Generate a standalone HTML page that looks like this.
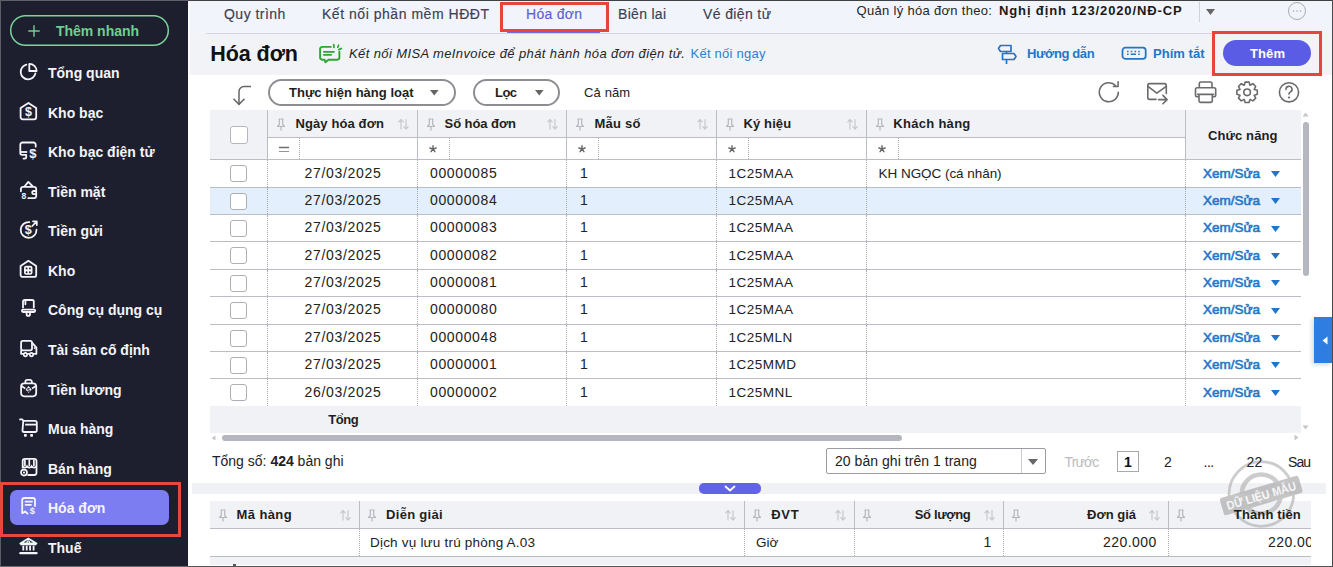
<!DOCTYPE html>
<html><head><meta charset="utf-8"><style>
html,body{margin:0;padding:0;}
body{width:1333px;height:567px;position:relative;overflow:hidden;background:#fff;font-family:"Liberation Sans",sans-serif;}
.t{position:absolute;white-space:nowrap;z-index:2;font-family:"Liberation Sans",sans-serif;}
.b{position:absolute;display:block;}
</style></head><body>
<div class="b" style="left:0px;top:0px;width:188px;height:567px;background:#1e1f2e"></div>
<svg class="b" style="left:9px;top:14px;" width="161" height="33" viewBox="0 0 161 33"><rect x="1.7" y="1.7" width="157.6" height="29.6" rx="14.8" fill="none" stroke="#79d59c" stroke-width="1.5"/></svg>
<svg class="b" style="left:27px;top:24px;" width="14" height="14" viewBox="0 0 14 14"><path d="M7 1.3V12.7M1.3 7H12.7" stroke="#6fd093" stroke-width="1.4"/></svg>
<div class="t" style="left:56.00px;top:23.65px;font-size:14px;line-height:14px;color:#6dd092;font-weight:bold;letter-spacing:-0.024px;">Thêm nhanh</div>
<svg class="b" style="left:18px;top:62px;overflow:visible" width="21" height="21" viewBox="0 0 21 21"><path d="M8.4 2.7A7.4 7.4 0 1 0 17.4 11.3" fill="none" stroke="#f4f4fa" stroke-width="1.8" stroke-linecap="round"/><path d="M11.3 1.9A7.2 7.2 0 0 1 18.6 9H11.3Z" fill="none" stroke="#f4f4fa" stroke-width="1.8" stroke-linejoin="round"/></svg>
<div class="t" style="left:48.00px;top:66.15px;font-size:14px;line-height:14px;color:#f4f4fa;font-weight:bold;letter-spacing:0.000px;">Tổng quan</div>
<svg class="b" style="left:18px;top:102px;overflow:visible" width="21" height="21" viewBox="0 0 21 21"><path d="M2.6 6L10.4 0.9L18.2 6V15.3A2 2 0 0 1 16.2 17.3H4.6A2 2 0 0 1 2.6 15.3Z" fill="none" stroke="#f4f4fa" stroke-width="1.8" stroke-linejoin="round"/><text x="10.5" y="14.4" font-size="12.5" font-weight="bold" fill="#f4f4fa" text-anchor="middle" font-family="Liberation Sans">$</text></svg>
<div class="t" style="left:48.00px;top:106.15px;font-size:14px;line-height:14px;color:#f4f4fa;font-weight:bold;letter-spacing:0.000px;">Kho bạc</div>
<svg class="b" style="left:18px;top:141px;overflow:visible" width="21" height="21" viewBox="0 0 21 21"><path d="M17.7 5.7V3.7A2.2 2.2 0 0 0 15.5 1.5H4.5A2.2 2.2 0 0 0 2.3 3.7V11.2V12A1.8 1.8 0 0 0 4.1 13.8H8.2V16A1.6 1.6 0 0 1 6.6 17.6H5.5" fill="none" stroke="#f4f4fa" stroke-width="1.8" stroke-linecap="round" stroke-linejoin="round"/><path d="M2.8 11H9.2" stroke="#f4f4fa" stroke-width="1.8"/><text x="14.8" y="17" font-size="13" font-weight="bold" fill="#f4f4fa" text-anchor="middle" font-family="Liberation Sans">$</text></svg>
<div class="t" style="left:48.00px;top:145.15px;font-size:14px;line-height:14px;color:#f4f4fa;font-weight:bold;letter-spacing:0.000px;">Kho bạc điện tử</div>
<svg class="b" style="left:18px;top:181px;overflow:visible" width="21" height="21" viewBox="0 0 21 21"><path d="M2.9 10.3V8A2.2 2.2 0 0 1 5.1 5.8H16A2.2 2.2 0 0 1 18.2 8V15A2.2 2.2 0 0 1 16 17.2H10.3" fill="none" stroke="#f4f4fa" stroke-width="1.8" stroke-linecap="round"/><path d="M6.5 5.5L10.3 0.9L14.8 5.5" fill="none" stroke="#f4f4fa" stroke-width="1.8" stroke-linejoin="round"/><path d="M18 10H15.8A1.6 1.6 0 0 0 15.8 13.2H18" fill="none" stroke="#f4f4fa" stroke-width="1.8"/><text x="5.9" y="17.9" font-size="8.5" font-weight="bold" fill="#f4f4fa" text-anchor="middle" font-family="Liberation Sans">8</text></svg>
<div class="t" style="left:48.00px;top:185.15px;font-size:14px;line-height:14px;color:#f4f4fa;font-weight:bold;letter-spacing:0.000px;">Tiền mặt</div>
<svg class="b" style="left:18px;top:220px;overflow:visible" width="21" height="21" viewBox="0 0 21 21"><path d="M11.3 2.1A7.9 7.9 0 1 0 18.5 9.6" fill="none" stroke="#f4f4fa" stroke-width="1.8" stroke-linecap="round"/><path d="M14.3 6L18.6 1.5M15 1.3H18.8V5.1" fill="none" stroke="#f4f4fa" stroke-width="1.8" stroke-linecap="round" stroke-linejoin="round"/><text x="10.3" y="14.2" font-size="12.5" font-weight="bold" fill="#f4f4fa" text-anchor="middle" font-family="Liberation Sans">$</text></svg>
<div class="t" style="left:48.00px;top:224.15px;font-size:14px;line-height:14px;color:#f4f4fa;font-weight:bold;letter-spacing:0.000px;">Tiền gửi</div>
<svg class="b" style="left:18px;top:260px;overflow:visible" width="21" height="21" viewBox="0 0 21 21"><path d="M2.6 6L10.4 0.8L18.2 6V14.9A2 2 0 0 1 16.2 16.9H4.6A2 2 0 0 1 2.6 14.9Z" fill="none" stroke="#f4f4fa" stroke-width="1.8" stroke-linejoin="round"/><rect x="6" y="5.8" width="8.5" height="9" rx="2.2" fill="#f4f4fa"/><circle cx="8.6" cy="8.4" r="0.95" fill="#1e1f2e"/><circle cx="11.9" cy="8.4" r="0.95" fill="#1e1f2e"/><circle cx="8.6" cy="12.2" r="0.95" fill="#1e1f2e"/><circle cx="11.9" cy="12.2" r="0.95" fill="#1e1f2e"/></svg>
<div class="t" style="left:48.00px;top:264.15px;font-size:14px;line-height:14px;color:#f4f4fa;font-weight:bold;letter-spacing:0.000px;">Kho</div>
<svg class="b" style="left:18px;top:299px;overflow:visible" width="21" height="21" viewBox="0 0 21 21"><path d="M5 9.2V2.6A1.6 1.6 0 0 1 6.6 1H14.2A1.6 1.6 0 0 1 15.8 2.6V9.2" fill="none" stroke="#f4f4fa" stroke-width="1.8"/><path d="M7.4 1.9V5.3" stroke="#f4f4fa" stroke-width="1.8" stroke-linecap="round"/><rect x="3.9" y="10.6" width="13.3" height="2.4" rx="1.2" fill="none" stroke="#f4f4fa" stroke-width="1.8"/><path d="M8.6 13.3V15.2A1.7 1.7 0 0 0 12 15.2V13.3" fill="none" stroke="#f4f4fa" stroke-width="1.8"/></svg>
<div class="t" style="left:48.00px;top:303.15px;font-size:14px;line-height:14px;color:#f4f4fa;font-weight:bold;letter-spacing:0.000px;">Công cụ dụng cụ</div>
<svg class="b" style="left:18px;top:339px;overflow:visible" width="21" height="21" viewBox="0 0 21 21"><rect x="3.1" y="1.8" width="10.9" height="9.5" rx="1.8" fill="none" stroke="#f4f4fa" stroke-width="1.8"/><path d="M14 3.6L18.4 8.6V14.8H3.1V11.3" fill="none" stroke="#f4f4fa" stroke-width="1.8" stroke-linejoin="round"/><path d="M16 8.5L17.2 9.8" stroke="#f4f4fa" stroke-width="1.4"/><circle cx="7.4" cy="15.6" r="1.7" fill="#1e1f2e" stroke="#f4f4fa" stroke-width="1.7"/><circle cx="13.5" cy="15.6" r="1.7" fill="#1e1f2e" stroke="#f4f4fa" stroke-width="1.7"/></svg>
<div class="t" style="left:48.00px;top:343.15px;font-size:14px;line-height:14px;color:#f4f4fa;font-weight:bold;letter-spacing:0.000px;">Tài sản cố định</div>
<svg class="b" style="left:18px;top:379px;overflow:visible" width="21" height="21" viewBox="0 0 21 21"><rect x="3.1" y="4.3" width="15.1" height="13" rx="3.2" fill="none" stroke="#f4f4fa" stroke-width="1.8"/><path d="M7.4 4.3V2.6A1.8 1.8 0 0 1 9.2 0.8H12A1.8 1.8 0 0 1 13.8 2.6V4.3" fill="none" stroke="#f4f4fa" stroke-width="1.8"/><path d="M3 6.8L7.3 9.4M18.3 6.8L14 9.4" stroke="#f4f4fa" stroke-width="1.7"/><path d="M10.6 7L13.6 10.5L10.6 14L7.6 10.5Z" fill="#f4f4fa"/><text x="10.6" y="12.6" font-size="5.5" font-weight="bold" fill="#1e1f2e" text-anchor="middle" font-family="Liberation Sans">$</text></svg>
<div class="t" style="left:48.00px;top:383.15px;font-size:14px;line-height:14px;color:#f4f4fa;font-weight:bold;letter-spacing:0.000px;">Tiền lương</div>
<svg class="b" style="left:18px;top:418px;overflow:visible" width="21" height="21" viewBox="0 0 21 21"><path d="M2 1.4H4.3L5.3 2.8H17.2A1.6 1.6 0 0 1 18.8 4.4V12.4A1.6 1.6 0 0 1 17.2 14H6.1A1.6 1.6 0 0 1 4.5 12.4L5.3 2.8" fill="none" stroke="#f4f4fa" stroke-width="1.8" stroke-linecap="round" stroke-linejoin="round"/><path d="M7.1 6.6H18" stroke="#f4f4fa" stroke-width="1.8"/><rect x="6" y="16" width="2.8" height="2.7" rx="0.7" fill="#f4f4fa"/><rect x="12.2" y="16" width="2.8" height="2.7" rx="0.7" fill="#f4f4fa"/></svg>
<div class="t" style="left:48.00px;top:422.15px;font-size:14px;line-height:14px;color:#f4f4fa;font-weight:bold;letter-spacing:0.000px;">Mua hàng</div>
<svg class="b" style="left:18px;top:458px;overflow:visible" width="21" height="21" viewBox="0 0 21 21"><path d="M4.7 10.5V3A2.2 2.2 0 0 1 6.9 0.8H16.3A2.2 2.2 0 0 1 18.5 3V14.8A2.2 2.2 0 0 1 16.3 17H9.5" fill="none" stroke="#f4f4fa" stroke-width="1.8"/><path d="M4.7 8.3C5.5 10 8 10 9 8.3C10 10 12.6 10 13.6 8.3C14.6 10 17.5 10 18.5 8.3" fill="none" stroke="#f4f4fa" stroke-width="1.7"/><path d="M6.9 2.2V7.5M11.3 2.2V7.5M15.9 2.2V7.5" stroke="#f4f4fa" stroke-width="1.7" stroke-linecap="round"/><circle cx="6" cy="14.6" r="3" fill="#1e1f2e" stroke="#f4f4fa" stroke-width="1.7"/><circle cx="6" cy="14.6" r="1.1" fill="#f4f4fa"/></svg>
<div class="t" style="left:48.00px;top:462.15px;font-size:14px;line-height:14px;color:#f4f4fa;font-weight:bold;letter-spacing:0.000px;">Bán hàng</div>
<div class="b" style="left:10px;top:490px;width:159px;height:35px;background:#7b7df0;border-radius:7px"></div>
<svg class="b" style="left:18px;top:497px;overflow:visible" width="21" height="21" viewBox="0 0 21 21"><path d="M17 9V3.2A2.2 2.2 0 0 0 14.8 1H6.4A2.2 2.2 0 0 0 4.2 3.2V16.2L7.1 14.4L9.5 16.7" fill="none" stroke="#f4f4fa" stroke-width="1.8" stroke-linecap="round" stroke-linejoin="round"/><path d="M7.6 4.6H14M7.6 7.8H13" stroke="#f4f4fa" stroke-width="1.8" stroke-linecap="round"/><text x="14.5" y="16.6" font-size="9.5" font-weight="bold" fill="#f4f4fa" text-anchor="middle" font-family="Liberation Sans">$</text></svg>
<div class="t" style="left:48.00px;top:501.15px;font-size:14px;line-height:14px;color:#f4f4fa;font-weight:bold;letter-spacing:0.000px;">Hóa đơn</div>
<svg class="b" style="left:18px;top:537px;overflow:visible" width="21" height="21" viewBox="0 0 21 21"><path d="M2.3 6.5L10.3 1.6L18.5 6.5Z" fill="none" stroke="#f4f4fa" stroke-width="1.8" stroke-linejoin="round"/><circle cx="10.3" cy="5.2" r="1.3" fill="none" stroke="#f4f4fa" stroke-width="1.2"/><path d="M5.3 8.8V13.5M8.7 8.8V13.5M12.1 8.8V13.5M15.6 8.8V13.5" stroke="#f4f4fa" stroke-width="1.8"/><path d="M2.3 16.2H18.6" stroke="#f4f4fa" stroke-width="2.2" stroke-linecap="round"/><path d="M2.5 7.6H18.3" stroke="#f4f4fa" stroke-width="1.4"/></svg>
<div class="t" style="left:48.00px;top:541.15px;font-size:14px;line-height:14px;color:#f4f4fa;font-weight:bold;letter-spacing:0.000px;">Thuế</div>
<div class="b" style="left:0px;top:482px;width:181px;height:55px;border:3px solid #e8473e;box-sizing:border-box;z-index:6"></div>
<div class="b" style="left:188px;top:0px;width:1145px;height:75px;background:#f2f3f7"></div>
<div class="b" style="left:190px;top:0px;width:1143px;height:33px;background:#f2f4fb"></div>
<div class="b" style="left:188px;top:0px;width:2px;height:567px;background:#fbfbfd"></div>
<div class="b" style="left:188px;top:75px;width:1145px;height:492px;background:#fff"></div>
<div class="b" style="left:206px;top:33px;width:1110px;height:1px;background:#d3d6de"></div>
<div class="t" style="left:224.00px;top:7.15px;font-size:14px;line-height:14px;color:#3b4052;letter-spacing:0.478px;-webkit-text-stroke:0.15px #3b4052;">Quy trình</div>
<div class="t" style="left:322.00px;top:7.15px;font-size:14px;line-height:14px;color:#3b4052;letter-spacing:0.530px;-webkit-text-stroke:0.15px #3b4052;">Kết nối phần mềm HĐĐT</div>
<div class="t" style="left:526.00px;top:7.15px;font-size:14px;line-height:14px;color:#5b60d8;letter-spacing:0.279px;-webkit-text-stroke:0.15px #5b60d8;">Hóa đơn</div>
<div class="b" style="left:507px;top:31px;width:93px;height:2px;background:#6a6ee0"></div>
<div class="t" style="left:618.00px;top:7.15px;font-size:14px;line-height:14px;color:#3b4052;letter-spacing:0.298px;-webkit-text-stroke:0.15px #3b4052;">Biên lai</div>
<div class="t" style="left:703.00px;top:7.15px;font-size:14px;line-height:14px;color:#3b4052;letter-spacing:0.374px;-webkit-text-stroke:0.15px #3b4052;">Vé điện tử</div>
<div class="b" style="left:500px;top:2px;width:109px;height:30px;border:3px solid #e6453c;box-sizing:border-box;z-index:3"></div>
<div class="t" style="left:856.50px;top:4.00px;font-size:13px;line-height:13px;color:#262626;letter-spacing:0.309px;">Quản lý hóa đơn theo:</div>
<div class="t" style="left:999.00px;top:4.00px;font-size:13px;line-height:13px;color:#1a1a1a;font-weight:bold;letter-spacing:0.872px;">Nghị định 123/2020/NĐ-CP</div>
<div class="b" style="left:1199px;top:2px;width:1px;height:20px;background:#cfd1d8"></div>
<svg class="b" style="left:1206px;top:9px;" width="9" height="6" viewBox="0 0 9 6"><path d="M0 0H9L4.5 6Z" fill="#666"/></svg>
<svg class="b" style="left:1287px;top:1px;" width="20" height="20" viewBox="0 0 20 20"><circle cx="10" cy="10" r="8.5" fill="none" stroke="#a9abb3" stroke-width="1"/><circle cx="6.5" cy="10" r=".7" fill="#999"/><circle cx="10" cy="10" r=".7" fill="#999"/><circle cx="13.5" cy="10" r=".7" fill="#999"/></svg>
<div class="t" style="left:210.30px;top:43.80px;font-size:21.5px;line-height:21.5px;color:#111;font-weight:bold;letter-spacing:-0.074px;">Hóa đơn</div>
<svg class="b" style="left:318px;top:43px;" width="26" height="22" viewBox="0 0 26 22"><path d="M12.8 3.9H4.2A2.1 2.1 0 0 0 2.1 6V14.6A2.1 2.1 0 0 0 4.2 16.7H6.6L7.4 19.3L10.4 16.7H19.3A2.1 2.1 0 0 0 21.4 14.6V8.8" fill="none" stroke="#2fa535" stroke-width="1.9" stroke-linejoin="round" stroke-linecap="round"/><path d="M5.2 8.8H16.6M5.2 11.8H13.8" stroke="#2fa535" stroke-width="1.7"/><path d="M15.7 1.7L16 4.4M20.6 2.2L19.8 4.2M20.8 6.6L23.4 5.5" stroke="#2fa535" stroke-width="1.7" stroke-linecap="round"/></svg>
<div class="t" style="left:349.00px;top:47.00px;font-size:13px;line-height:13px;color:#1f1f1f;font-style:italic;letter-spacing:0.385px;">Kết nối MISA meInvoice để phát hành hóa đơn điện tử.</div>
<div class="t" style="left:690.50px;top:47.00px;font-size:13px;line-height:13px;color:#2b80d0;letter-spacing:0.248px;">Kết nối ngay</div>
<svg class="b" style="left:997px;top:44px;" width="21" height="21" viewBox="0 0 21 21"><path d="M3.5 1.5H14V7.5H3.5L1.5 4.5Z" fill="none" stroke="#2276c9" stroke-width="1.7" stroke-linejoin="round"/><path d="M5.5 9.5H17L19 12.5L17 15.5H5.5Z" fill="none" stroke="#2276c9" stroke-width="1.7" stroke-linejoin="round"/><path d="M9.5 7.5V9.5M9.5 15.5V20" stroke="#2276c9" stroke-width="1.7"/></svg>
<div class="t" style="left:1027.00px;top:47.00px;font-size:13px;line-height:13px;color:#2276c9;font-weight:bold;letter-spacing:-0.381px;">Hướng dẫn</div>
<svg class="b" style="left:1120px;top:45px;" width="28" height="17" viewBox="0 0 28 17"><rect x="2.5" y="2.7" width="23.2" height="11.1" rx="2.8" fill="none" stroke="#2276c9" stroke-width="1.8"/><path d="M7 6.5H8.6M10.7 6.5H12.3M14.5 6.5H16.1M18.2 6.5H19.8M7 9.3H8.6M18.2 9.3H19.8M10.7 9.3H16" stroke="#2276c9" stroke-width="1.4"/></svg>
<div class="t" style="left:1153.00px;top:47.00px;font-size:13px;line-height:13px;color:#2276c9;font-weight:bold;letter-spacing:0.031px;">Phím tắt</div>
<div class="b" style="left:1223px;top:40px;width:88px;height:26px;background:#5b5ce6;border-radius:13px"></div>
<div class="t" style="left:1250.00px;top:47.00px;font-size:13px;line-height:13px;color:#fff;font-weight:bold;letter-spacing:0.110px;">Thêm</div>
<div class="b" style="left:1212px;top:31px;width:110px;height:45px;border:3px solid #e5453d;box-sizing:border-box"></div>
<svg class="b" style="left:231px;top:84px;" width="22" height="23" viewBox="0 0 22 23"><path d="M20 2.5H13A5 5 0 0 0 8 7.5V20.5" fill="none" stroke="#666" stroke-width="1.5"/><path d="M2.5 14.8L8 20.4L13.5 14.8" fill="none" stroke="#666" stroke-width="1.5"/></svg>
<div class="b" style="left:268px;top:79px;width:188px;height:27px;border:2px solid #8d8d93;border-radius:14px;box-sizing:border-box"></div>
<div class="t" style="left:289.00px;top:86.00px;font-size:13px;line-height:13px;color:#1e1e1e;font-weight:bold;letter-spacing:0.019px;">Thực hiện hàng loạt</div>
<svg class="b" style="left:430px;top:90px;" width="9" height="6" viewBox="0 0 9 6"><path d="M0 0H8.6L4.3 5.6Z" fill="#666"/></svg>
<div class="b" style="left:473px;top:79px;width:87px;height:27px;border:2px solid #8d8d93;border-radius:14px;box-sizing:border-box"></div>
<div class="t" style="left:495.00px;top:86.00px;font-size:13px;line-height:13px;color:#1e1e1e;font-weight:bold;letter-spacing:-0.555px;">Lọc</div>
<svg class="b" style="left:534.5px;top:90px;" width="9" height="6" viewBox="0 0 9 6"><path d="M0 0H8.6L4.3 5.6Z" fill="#666"/></svg>
<div class="t" style="left:584.00px;top:86.00px;font-size:13px;line-height:13px;color:#222;letter-spacing:0.136px;">Cả năm</div>
<svg class="b" style="left:1094px;top:78px;" width="30" height="30" viewBox="0 0 30 30"><path d="M24.3 14.3A9.5 9.5 0 1 1 21.6 7.6" fill="none" stroke="#6b6b6b" stroke-width="1.6" stroke-linecap="round"/><path d="M24.1 3.8V8.5H19.4" fill="none" stroke="#6b6b6b" stroke-width="1.6" stroke-linecap="round" stroke-linejoin="round"/></svg>
<svg class="b" style="left:1142px;top:78px;" width="30" height="30" viewBox="0 0 30 30"><path d="M14 21.4H7.6A1.8 1.8 0 0 1 5.8 19.6V7.4A1.8 1.8 0 0 1 7.6 5.6H22.5A1.8 1.8 0 0 1 24.3 7.4V15.6" fill="none" stroke="#6b6b6b" stroke-width="1.6" stroke-linecap="round"/><path d="M6.3 8.7L14.8 15.1L23.9 8.7" fill="none" stroke="#6b6b6b" stroke-width="1.6" stroke-linejoin="round" stroke-linecap="round"/><path d="M16.5 21.6H25M20.9 17.4L25.1 21.6L20.9 25.8" fill="none" stroke="#6b6b6b" stroke-width="1.6" stroke-linecap="round" stroke-linejoin="round"/></svg>
<svg class="b" style="left:1190px;top:78px;" width="30" height="30" viewBox="0 0 30 30"><path d="M9.3 9.5V5.6A1.6 1.6 0 0 1 10.9 4H20.4A1.6 1.6 0 0 1 22 5.6V9.5" fill="none" stroke="#6b6b6b" stroke-width="1.6"/><path d="M8.9 18.8H7.2A1.7 1.7 0 0 1 5.5 17.1V11.4A1.7 1.7 0 0 1 7.2 9.7H24A1.7 1.7 0 0 1 25.7 11.4V17.1A1.7 1.7 0 0 1 24 18.8H22.3" fill="none" stroke="#6b6b6b" stroke-width="1.6"/><path d="M7.6 16.4H23.6" stroke="#6b6b6b" stroke-width="1.6" stroke-linecap="round"/><path d="M9 16.4V22.8A1.6 1.6 0 0 0 10.6 24.4H20.7A1.6 1.6 0 0 0 22.3 22.8V16.4" fill="none" stroke="#6b6b6b" stroke-width="1.6"/></svg>
<svg class="b" style="left:1232px;top:78px;" width="30" height="30" viewBox="0 0 30 30"><path d="M12.22 7.16 L13.12 4.09 L17.08 4.09 L17.98 7.16 L18.11 7.21 L20.92 5.68 L23.72 8.48 L22.19 11.29 L22.24 11.42 L25.31 12.32 L25.31 16.28 L22.24 17.18 L22.19 17.31 L23.72 20.12 L20.92 22.92 L18.11 21.39 L17.98 21.44 L17.08 24.51 L13.12 24.51 L12.22 21.44 L12.09 21.39 L9.28 22.92 L6.48 20.12 L8.01 17.31 L7.96 17.18 L4.89 16.28 L4.89 12.32 L7.96 11.42 L8.01 11.29 L6.48 8.48 L9.28 5.68 L12.09 7.21Z" fill="none" stroke="#6b6b6b" stroke-width="1.6" stroke-linejoin="round"/><circle cx="15.1" cy="14.3" r="3.3" fill="none" stroke="#6b6b6b" stroke-width="1.6"/></svg>
<svg class="b" style="left:1275px;top:78px;" width="30" height="30" viewBox="0 0 30 30"><circle cx="14" cy="14.3" r="9.6" fill="none" stroke="#6b6b6b" stroke-width="1.6"/><path d="M11 11.4A3 3 0 1 1 15.5 13.9C14.6 14.4 14 15 14 16.1" fill="none" stroke="#6b6b6b" stroke-width="1.6" stroke-linecap="round"/><circle cx="14" cy="19.5" r="1.1" fill="#6b6b6b"/></svg>
<!--TABLE-->
<div class="b" style="left:210px;top:110px;width:1091px;height:49px;background:#f1f2f6"></div>
<div class="b" style="left:267px;top:137px;width:918px;height:22px;background:#fff"></div>
<div class="b" style="left:267px;top:110px;width:1px;height:49px;background:#babdc3"></div>
<div class="b" style="left:417px;top:110px;width:1px;height:49px;background:#babdc3"></div>
<div class="b" style="left:566px;top:110px;width:1px;height:49px;background:#babdc3"></div>
<div class="b" style="left:716px;top:110px;width:1px;height:49px;background:#babdc3"></div>
<div class="b" style="left:866px;top:110px;width:1px;height:49px;background:#babdc3"></div>
<div class="b" style="left:1185px;top:110px;width:1px;height:49px;background:#babdc3"></div>
<div class="b" style="left:267px;top:137px;width:918px;height:1px;background:#babdc3"></div>
<div class="b" style="left:210px;top:159px;width:1091px;height:1px;background:#babdc3"></div>
<div class="b" style="left:230px;top:126px;width:18px;height:18px;border:1.5px solid #b4b6bc;border-radius:3px;background:#fff;box-sizing:border-box"></div>
<svg class="b" style="left:275.5px;top:118px;" width="10" height="14" viewBox="0 0 10 14"><path d="M2.5 1H7.5M3.3 1V6.5L1.5 8.5H8.5L6.7 6.5V1M5 8.5V12.5" fill="none" stroke="#b5b7bd" stroke-width="1.2" stroke-linejoin="round"/></svg>
<div class="t" style="left:295.40px;top:117.00px;font-size:13px;line-height:13px;color:#1e1e1e;font-weight:bold;letter-spacing:0.123px;">Ngày hóa đơn</div>
<svg class="b" style="left:398px;top:118px;" width="11" height="13" viewBox="0 0 11 13"><path d="M3 11V1.5M0.8 3.8L3 1.5L5.2 3.8M8 1.5V11M5.8 8.7L8 11L10.2 8.7" fill="none" stroke="#c6c8cd" stroke-width="1.2" stroke-linecap="round" stroke-linejoin="round"/></svg>
<svg class="b" style="left:279px;top:146px;" width="11" height="6" viewBox="0 0 11 6"><path d="M0 1.5H10M0 6H10" stroke="#707070" stroke-width="1.3"/></svg>
<div class="b" style="left:299px;top:138px;width:0;height:21px;border-left:1px dotted #a9abb1"></div>
<svg class="b" style="left:425.5px;top:118px;" width="10" height="14" viewBox="0 0 10 14"><path d="M2.5 1H7.5M3.3 1V6.5L1.5 8.5H8.5L6.7 6.5V1M5 8.5V12.5" fill="none" stroke="#b5b7bd" stroke-width="1.2" stroke-linejoin="round"/></svg>
<div class="t" style="left:444.60px;top:117.00px;font-size:13px;line-height:13px;color:#1e1e1e;font-weight:bold;letter-spacing:-0.074px;">Số hóa đơn</div>
<svg class="b" style="left:547px;top:118px;" width="11" height="13" viewBox="0 0 11 13"><path d="M3 11V1.5M0.8 3.8L3 1.5L5.2 3.8M8 1.5V11M5.8 8.7L8 11L10.2 8.7" fill="none" stroke="#c6c8cd" stroke-width="1.2" stroke-linecap="round" stroke-linejoin="round"/></svg>
<svg class="b" style="left:428px;top:144px;" width="10" height="10" viewBox="0 0 10 10"><path d="M5 5L5.00 1.70M5 5L8.14 3.98M5 5L6.94 7.67M5 5L3.06 7.67M5 5L1.86 3.98" stroke="#666" stroke-width="1.4" stroke-linecap="round"/></svg>
<div class="b" style="left:449px;top:138px;width:0;height:21px;border-left:1px dotted #a9abb1"></div>
<svg class="b" style="left:574.5px;top:118px;" width="10" height="14" viewBox="0 0 10 14"><path d="M2.5 1H7.5M3.3 1V6.5L1.5 8.5H8.5L6.7 6.5V1M5 8.5V12.5" fill="none" stroke="#b5b7bd" stroke-width="1.2" stroke-linejoin="round"/></svg>
<div class="t" style="left:594.50px;top:117.00px;font-size:13px;line-height:13px;color:#1e1e1e;font-weight:bold;letter-spacing:0.243px;">Mẫu số</div>
<svg class="b" style="left:697px;top:118px;" width="11" height="13" viewBox="0 0 11 13"><path d="M3 11V1.5M0.8 3.8L3 1.5L5.2 3.8M8 1.5V11M5.8 8.7L8 11L10.2 8.7" fill="none" stroke="#c6c8cd" stroke-width="1.2" stroke-linecap="round" stroke-linejoin="round"/></svg>
<svg class="b" style="left:577px;top:144px;" width="10" height="10" viewBox="0 0 10 10"><path d="M5 5L5.00 1.70M5 5L8.14 3.98M5 5L6.94 7.67M5 5L3.06 7.67M5 5L1.86 3.98" stroke="#666" stroke-width="1.4" stroke-linecap="round"/></svg>
<div class="b" style="left:598px;top:138px;width:0;height:21px;border-left:1px dotted #a9abb1"></div>
<svg class="b" style="left:724.5px;top:118px;" width="10" height="14" viewBox="0 0 10 14"><path d="M2.5 1H7.5M3.3 1V6.5L1.5 8.5H8.5L6.7 6.5V1M5 8.5V12.5" fill="none" stroke="#b5b7bd" stroke-width="1.2" stroke-linejoin="round"/></svg>
<div class="t" style="left:743.60px;top:117.00px;font-size:13px;line-height:13px;color:#1e1e1e;font-weight:bold;letter-spacing:0.091px;">Ký hiệu</div>
<svg class="b" style="left:847px;top:118px;" width="11" height="13" viewBox="0 0 11 13"><path d="M3 11V1.5M0.8 3.8L3 1.5L5.2 3.8M8 1.5V11M5.8 8.7L8 11L10.2 8.7" fill="none" stroke="#c6c8cd" stroke-width="1.2" stroke-linecap="round" stroke-linejoin="round"/></svg>
<svg class="b" style="left:727px;top:144px;" width="10" height="10" viewBox="0 0 10 10"><path d="M5 5L5.00 1.70M5 5L8.14 3.98M5 5L6.94 7.67M5 5L3.06 7.67M5 5L1.86 3.98" stroke="#666" stroke-width="1.4" stroke-linecap="round"/></svg>
<div class="b" style="left:748px;top:138px;width:0;height:21px;border-left:1px dotted #a9abb1"></div>
<svg class="b" style="left:874.5px;top:118px;" width="10" height="14" viewBox="0 0 10 14"><path d="M2.5 1H7.5M3.3 1V6.5L1.5 8.5H8.5L6.7 6.5V1M5 8.5V12.5" fill="none" stroke="#b5b7bd" stroke-width="1.2" stroke-linejoin="round"/></svg>
<div class="t" style="left:893.30px;top:117.00px;font-size:13px;line-height:13px;color:#1e1e1e;font-weight:bold;letter-spacing:0.290px;">Khách hàng</div>
<svg class="b" style="left:877px;top:144px;" width="10" height="10" viewBox="0 0 10 10"><path d="M5 5L5.00 1.70M5 5L8.14 3.98M5 5L6.94 7.67M5 5L3.06 7.67M5 5L1.86 3.98" stroke="#666" stroke-width="1.4" stroke-linecap="round"/></svg>
<div class="b" style="left:898px;top:138px;width:0;height:21px;border-left:1px dotted #a9abb1"></div>
<div class="t" style="left:1208.00px;top:129.00px;font-size:13px;line-height:13px;color:#1e1e1e;font-weight:bold;letter-spacing:0.108px;">Chức năng</div>
<div class="b" style="left:210px;top:187px;width:1091px;height:1px;background:#babdc3"></div>
<div class="b" style="left:267px;top:160px;width:0;height:27px;border-left:1px dotted #a9abb1"></div>
<div class="b" style="left:417px;top:160px;width:0;height:27px;border-left:1px dotted #a9abb1"></div>
<div class="b" style="left:566px;top:160px;width:0;height:27px;border-left:1px dotted #a9abb1"></div>
<div class="b" style="left:716px;top:160px;width:0;height:27px;border-left:1px dotted #a9abb1"></div>
<div class="b" style="left:866px;top:160px;width:0;height:27px;border-left:1px dotted #a9abb1"></div>
<div class="b" style="left:1185px;top:160px;width:0;height:27px;border-left:1px dotted #a9abb1"></div>
<div class="b" style="left:230px;top:165px;width:17px;height:17px;border:1.5px solid #adafb5;border-radius:3px;background:#fff;box-sizing:border-box"></div>
<div class="t" style="left:304.50px;top:166.15px;font-size:14px;line-height:14px;color:#222;letter-spacing:0.682px;">27/03/2025</div>
<div class="t" style="left:430.00px;top:166.15px;font-size:14px;line-height:14px;color:#222;letter-spacing:0.630px;">00000085</div>
<div class="t" style="left:580.00px;top:166.15px;font-size:14px;line-height:14px;color:#222;letter-spacing:0.000px;">1</div>
<div class="t" style="left:728.60px;top:166.57px;font-size:13.5px;line-height:13.5px;color:#222;letter-spacing:0.479px;">1C25MAA</div>
<div class="t" style="left:878.60px;top:166.57px;font-size:13.5px;line-height:13.5px;color:#222;letter-spacing:-0.049px;">KH NGỌC (cá nhân)</div>
<div class="t" style="left:1203.00px;top:166.57px;font-size:13.5px;line-height:13.5px;color:#2477c9;letter-spacing:0.007px;-webkit-text-stroke:0.6px #2477c9;">Xem/Sửa</div>
<svg class="b" style="left:1271px;top:171px;" width="9" height="6" viewBox="0 0 9 6"><path d="M0 0H9L4.5 6Z" fill="#2174c8"/></svg>
<div class="b" style="left:210px;top:188px;width:1091px;height:26px;background:#e3effc"></div>
<div class="b" style="left:210px;top:214px;width:1091px;height:1px;background:#babdc3"></div>
<div class="b" style="left:267px;top:188px;width:0;height:26px;border-left:1px dotted #a9abb1"></div>
<div class="b" style="left:417px;top:188px;width:0;height:26px;border-left:1px dotted #a9abb1"></div>
<div class="b" style="left:566px;top:188px;width:0;height:26px;border-left:1px dotted #a9abb1"></div>
<div class="b" style="left:716px;top:188px;width:0;height:26px;border-left:1px dotted #a9abb1"></div>
<div class="b" style="left:866px;top:188px;width:0;height:26px;border-left:1px dotted #a9abb1"></div>
<div class="b" style="left:1185px;top:188px;width:0;height:26px;border-left:1px dotted #a9abb1"></div>
<div class="b" style="left:230px;top:193px;width:17px;height:17px;border:1.5px solid #adafb5;border-radius:3px;background:#fff;box-sizing:border-box"></div>
<div class="t" style="left:304.50px;top:193.15px;font-size:14px;line-height:14px;color:#222;letter-spacing:0.682px;">27/03/2025</div>
<div class="t" style="left:430.00px;top:193.15px;font-size:14px;line-height:14px;color:#222;letter-spacing:0.630px;">00000084</div>
<div class="t" style="left:580.00px;top:193.15px;font-size:14px;line-height:14px;color:#222;letter-spacing:0.000px;">1</div>
<div class="t" style="left:728.60px;top:193.57px;font-size:13.5px;line-height:13.5px;color:#222;letter-spacing:0.479px;">1C25MAA</div>
<div class="t" style="left:1203.00px;top:193.57px;font-size:13.5px;line-height:13.5px;color:#2477c9;letter-spacing:0.007px;-webkit-text-stroke:0.6px #2477c9;">Xem/Sửa</div>
<svg class="b" style="left:1271px;top:198px;" width="9" height="6" viewBox="0 0 9 6"><path d="M0 0H9L4.5 6Z" fill="#2174c8"/></svg>
<div class="b" style="left:210px;top:241px;width:1091px;height:1px;background:#babdc3"></div>
<div class="b" style="left:267px;top:215px;width:0;height:26px;border-left:1px dotted #a9abb1"></div>
<div class="b" style="left:417px;top:215px;width:0;height:26px;border-left:1px dotted #a9abb1"></div>
<div class="b" style="left:566px;top:215px;width:0;height:26px;border-left:1px dotted #a9abb1"></div>
<div class="b" style="left:716px;top:215px;width:0;height:26px;border-left:1px dotted #a9abb1"></div>
<div class="b" style="left:866px;top:215px;width:0;height:26px;border-left:1px dotted #a9abb1"></div>
<div class="b" style="left:1185px;top:215px;width:0;height:26px;border-left:1px dotted #a9abb1"></div>
<div class="b" style="left:230px;top:220px;width:17px;height:17px;border:1.5px solid #adafb5;border-radius:3px;background:#fff;box-sizing:border-box"></div>
<div class="t" style="left:304.50px;top:220.15px;font-size:14px;line-height:14px;color:#222;letter-spacing:0.682px;">27/03/2025</div>
<div class="t" style="left:430.00px;top:220.15px;font-size:14px;line-height:14px;color:#222;letter-spacing:0.630px;">00000083</div>
<div class="t" style="left:580.00px;top:220.15px;font-size:14px;line-height:14px;color:#222;letter-spacing:0.000px;">1</div>
<div class="t" style="left:728.60px;top:220.57px;font-size:13.5px;line-height:13.5px;color:#222;letter-spacing:0.479px;">1C25MAA</div>
<div class="t" style="left:1203.00px;top:220.57px;font-size:13.5px;line-height:13.5px;color:#2477c9;letter-spacing:0.007px;-webkit-text-stroke:0.6px #2477c9;">Xem/Sửa</div>
<svg class="b" style="left:1271px;top:226px;" width="9" height="6" viewBox="0 0 9 6"><path d="M0 0H9L4.5 6Z" fill="#2174c8"/></svg>
<div class="b" style="left:210px;top:269px;width:1091px;height:1px;background:#babdc3"></div>
<div class="b" style="left:267px;top:242px;width:0;height:27px;border-left:1px dotted #a9abb1"></div>
<div class="b" style="left:417px;top:242px;width:0;height:27px;border-left:1px dotted #a9abb1"></div>
<div class="b" style="left:566px;top:242px;width:0;height:27px;border-left:1px dotted #a9abb1"></div>
<div class="b" style="left:716px;top:242px;width:0;height:27px;border-left:1px dotted #a9abb1"></div>
<div class="b" style="left:866px;top:242px;width:0;height:27px;border-left:1px dotted #a9abb1"></div>
<div class="b" style="left:1185px;top:242px;width:0;height:27px;border-left:1px dotted #a9abb1"></div>
<div class="b" style="left:230px;top:247px;width:17px;height:17px;border:1.5px solid #adafb5;border-radius:3px;background:#fff;box-sizing:border-box"></div>
<div class="t" style="left:304.50px;top:248.15px;font-size:14px;line-height:14px;color:#222;letter-spacing:0.682px;">27/03/2025</div>
<div class="t" style="left:430.00px;top:248.15px;font-size:14px;line-height:14px;color:#222;letter-spacing:0.630px;">00000082</div>
<div class="t" style="left:580.00px;top:248.15px;font-size:14px;line-height:14px;color:#222;letter-spacing:0.000px;">1</div>
<div class="t" style="left:728.60px;top:248.57px;font-size:13.5px;line-height:13.5px;color:#222;letter-spacing:0.479px;">1C25MAA</div>
<div class="t" style="left:1203.00px;top:248.57px;font-size:13.5px;line-height:13.5px;color:#2477c9;letter-spacing:0.007px;-webkit-text-stroke:0.6px #2477c9;">Xem/Sửa</div>
<svg class="b" style="left:1271px;top:253px;" width="9" height="6" viewBox="0 0 9 6"><path d="M0 0H9L4.5 6Z" fill="#2174c8"/></svg>
<div class="b" style="left:210px;top:296px;width:1091px;height:1px;background:#babdc3"></div>
<div class="b" style="left:267px;top:270px;width:0;height:26px;border-left:1px dotted #a9abb1"></div>
<div class="b" style="left:417px;top:270px;width:0;height:26px;border-left:1px dotted #a9abb1"></div>
<div class="b" style="left:566px;top:270px;width:0;height:26px;border-left:1px dotted #a9abb1"></div>
<div class="b" style="left:716px;top:270px;width:0;height:26px;border-left:1px dotted #a9abb1"></div>
<div class="b" style="left:866px;top:270px;width:0;height:26px;border-left:1px dotted #a9abb1"></div>
<div class="b" style="left:1185px;top:270px;width:0;height:26px;border-left:1px dotted #a9abb1"></div>
<div class="b" style="left:230px;top:275px;width:17px;height:17px;border:1.5px solid #adafb5;border-radius:3px;background:#fff;box-sizing:border-box"></div>
<div class="t" style="left:304.50px;top:275.15px;font-size:14px;line-height:14px;color:#222;letter-spacing:0.682px;">27/03/2025</div>
<div class="t" style="left:430.00px;top:275.15px;font-size:14px;line-height:14px;color:#222;letter-spacing:0.630px;">00000081</div>
<div class="t" style="left:580.00px;top:275.15px;font-size:14px;line-height:14px;color:#222;letter-spacing:0.000px;">1</div>
<div class="t" style="left:728.60px;top:275.57px;font-size:13.5px;line-height:13.5px;color:#222;letter-spacing:0.479px;">1C25MAA</div>
<div class="t" style="left:1203.00px;top:275.57px;font-size:13.5px;line-height:13.5px;color:#2477c9;letter-spacing:0.007px;-webkit-text-stroke:0.6px #2477c9;">Xem/Sửa</div>
<svg class="b" style="left:1271px;top:280px;" width="9" height="6" viewBox="0 0 9 6"><path d="M0 0H9L4.5 6Z" fill="#2174c8"/></svg>
<div class="b" style="left:210px;top:324px;width:1091px;height:1px;background:#babdc3"></div>
<div class="b" style="left:267px;top:297px;width:0;height:27px;border-left:1px dotted #a9abb1"></div>
<div class="b" style="left:417px;top:297px;width:0;height:27px;border-left:1px dotted #a9abb1"></div>
<div class="b" style="left:566px;top:297px;width:0;height:27px;border-left:1px dotted #a9abb1"></div>
<div class="b" style="left:716px;top:297px;width:0;height:27px;border-left:1px dotted #a9abb1"></div>
<div class="b" style="left:866px;top:297px;width:0;height:27px;border-left:1px dotted #a9abb1"></div>
<div class="b" style="left:1185px;top:297px;width:0;height:27px;border-left:1px dotted #a9abb1"></div>
<div class="b" style="left:230px;top:302px;width:17px;height:17px;border:1.5px solid #adafb5;border-radius:3px;background:#fff;box-sizing:border-box"></div>
<div class="t" style="left:304.50px;top:302.15px;font-size:14px;line-height:14px;color:#222;letter-spacing:0.682px;">27/03/2025</div>
<div class="t" style="left:430.00px;top:302.15px;font-size:14px;line-height:14px;color:#222;letter-spacing:0.630px;">00000080</div>
<div class="t" style="left:580.00px;top:302.15px;font-size:14px;line-height:14px;color:#222;letter-spacing:0.000px;">1</div>
<div class="t" style="left:728.60px;top:302.57px;font-size:13.5px;line-height:13.5px;color:#222;letter-spacing:0.479px;">1C25MAA</div>
<div class="t" style="left:1203.00px;top:302.57px;font-size:13.5px;line-height:13.5px;color:#2477c9;letter-spacing:0.007px;-webkit-text-stroke:0.6px #2477c9;">Xem/Sửa</div>
<svg class="b" style="left:1271px;top:308px;" width="9" height="6" viewBox="0 0 9 6"><path d="M0 0H9L4.5 6Z" fill="#2174c8"/></svg>
<div class="b" style="left:210px;top:351px;width:1091px;height:1px;background:#babdc3"></div>
<div class="b" style="left:267px;top:325px;width:0;height:26px;border-left:1px dotted #a9abb1"></div>
<div class="b" style="left:417px;top:325px;width:0;height:26px;border-left:1px dotted #a9abb1"></div>
<div class="b" style="left:566px;top:325px;width:0;height:26px;border-left:1px dotted #a9abb1"></div>
<div class="b" style="left:716px;top:325px;width:0;height:26px;border-left:1px dotted #a9abb1"></div>
<div class="b" style="left:866px;top:325px;width:0;height:26px;border-left:1px dotted #a9abb1"></div>
<div class="b" style="left:1185px;top:325px;width:0;height:26px;border-left:1px dotted #a9abb1"></div>
<div class="b" style="left:230px;top:330px;width:17px;height:17px;border:1.5px solid #adafb5;border-radius:3px;background:#fff;box-sizing:border-box"></div>
<div class="t" style="left:304.50px;top:330.15px;font-size:14px;line-height:14px;color:#222;letter-spacing:0.682px;">27/03/2025</div>
<div class="t" style="left:430.00px;top:330.15px;font-size:14px;line-height:14px;color:#222;letter-spacing:0.630px;">00000048</div>
<div class="t" style="left:580.00px;top:330.15px;font-size:14px;line-height:14px;color:#222;letter-spacing:0.000px;">1</div>
<div class="t" style="left:728.60px;top:330.57px;font-size:13.5px;line-height:13.5px;color:#222;letter-spacing:0.480px;">1C25MLN</div>
<div class="t" style="left:1203.00px;top:330.57px;font-size:13.5px;line-height:13.5px;color:#2477c9;letter-spacing:0.007px;-webkit-text-stroke:0.6px #2477c9;">Xem/Sửa</div>
<svg class="b" style="left:1271px;top:335px;" width="9" height="6" viewBox="0 0 9 6"><path d="M0 0H9L4.5 6Z" fill="#2174c8"/></svg>
<div class="b" style="left:210px;top:378px;width:1091px;height:1px;background:#babdc3"></div>
<div class="b" style="left:267px;top:352px;width:0;height:26px;border-left:1px dotted #a9abb1"></div>
<div class="b" style="left:417px;top:352px;width:0;height:26px;border-left:1px dotted #a9abb1"></div>
<div class="b" style="left:566px;top:352px;width:0;height:26px;border-left:1px dotted #a9abb1"></div>
<div class="b" style="left:716px;top:352px;width:0;height:26px;border-left:1px dotted #a9abb1"></div>
<div class="b" style="left:866px;top:352px;width:0;height:26px;border-left:1px dotted #a9abb1"></div>
<div class="b" style="left:1185px;top:352px;width:0;height:26px;border-left:1px dotted #a9abb1"></div>
<div class="b" style="left:230px;top:357px;width:17px;height:17px;border:1.5px solid #adafb5;border-radius:3px;background:#fff;box-sizing:border-box"></div>
<div class="t" style="left:304.50px;top:357.15px;font-size:14px;line-height:14px;color:#222;letter-spacing:0.682px;">27/03/2025</div>
<div class="t" style="left:430.00px;top:357.15px;font-size:14px;line-height:14px;color:#222;letter-spacing:0.630px;">00000001</div>
<div class="t" style="left:580.00px;top:357.15px;font-size:14px;line-height:14px;color:#222;letter-spacing:0.000px;">1</div>
<div class="t" style="left:728.60px;top:357.57px;font-size:13.5px;line-height:13.5px;color:#222;letter-spacing:0.480px;">1C25MMD</div>
<div class="t" style="left:1203.00px;top:357.57px;font-size:13.5px;line-height:13.5px;color:#2477c9;letter-spacing:0.007px;-webkit-text-stroke:0.6px #2477c9;">Xem/Sửa</div>
<svg class="b" style="left:1271px;top:362px;" width="9" height="6" viewBox="0 0 9 6"><path d="M0 0H9L4.5 6Z" fill="#2174c8"/></svg>
<div class="b" style="left:267px;top:379px;width:0;height:27px;border-left:1px dotted #a9abb1"></div>
<div class="b" style="left:417px;top:379px;width:0;height:27px;border-left:1px dotted #a9abb1"></div>
<div class="b" style="left:566px;top:379px;width:0;height:27px;border-left:1px dotted #a9abb1"></div>
<div class="b" style="left:716px;top:379px;width:0;height:27px;border-left:1px dotted #a9abb1"></div>
<div class="b" style="left:866px;top:379px;width:0;height:27px;border-left:1px dotted #a9abb1"></div>
<div class="b" style="left:1185px;top:379px;width:0;height:27px;border-left:1px dotted #a9abb1"></div>
<div class="b" style="left:230px;top:384px;width:17px;height:17px;border:1.5px solid #adafb5;border-radius:3px;background:#fff;box-sizing:border-box"></div>
<div class="t" style="left:304.50px;top:385.15px;font-size:14px;line-height:14px;color:#222;letter-spacing:0.682px;">26/03/2025</div>
<div class="t" style="left:430.00px;top:385.15px;font-size:14px;line-height:14px;color:#222;letter-spacing:0.630px;">00000002</div>
<div class="t" style="left:580.00px;top:385.15px;font-size:14px;line-height:14px;color:#222;letter-spacing:0.000px;">1</div>
<div class="t" style="left:728.60px;top:385.57px;font-size:13.5px;line-height:13.5px;color:#222;letter-spacing:0.480px;">1C25MNL</div>
<div class="t" style="left:1203.00px;top:385.57px;font-size:13.5px;line-height:13.5px;color:#2477c9;letter-spacing:0.007px;-webkit-text-stroke:0.6px #2477c9;">Xem/Sửa</div>
<svg class="b" style="left:1271px;top:390px;" width="9" height="6" viewBox="0 0 9 6"><path d="M0 0H9L4.5 6Z" fill="#2174c8"/></svg>
<div class="b" style="left:210px;top:406px;width:1091px;height:27px;background:#f1f2f6"></div>
<div class="t" style="left:328.20px;top:413.00px;font-size:13px;line-height:13px;color:#1e1e1e;font-weight:bold;letter-spacing:-0.387px;">Tổng</div>
<div class="b" style="left:222px;top:435px;width:680px;height:6px;background:#b4b7bf;border-radius:3px"></div>
<svg class="b" style="left:211px;top:435px;" width="5" height="6" viewBox="0 0 5 6"><path d="M4.5 0.5V5.5L0.5 3Z" fill="#c4c6cb"/></svg>
<svg class="b" style="left:1294px;top:434px;" width="5" height="7" viewBox="0 0 5 7"><path d="M0.5 0.5V6.5L4.5 3.5Z" fill="#c4c6cb"/></svg>
<svg class="b" style="left:1302px;top:425px;" width="7" height="5" viewBox="0 0 7 5"><path d="M0.5 0.5H6.5L3.5 4.5Z" fill="#c4c6cb"/></svg>
<svg class="b" style="left:1302px;top:112px;" width="7" height="5" viewBox="0 0 7 5"><path d="M0.5 4.5H6.5L3.5 0.5Z" fill="#c4c6cb"/></svg>
<div class="b" style="left:1303px;top:122px;width:6px;height:154px;background:#b4b7bf;border-radius:3px"></div>
<div class="t" style="left:212.00px;top:454.15px;font-size:14px;line-height:14px;color:#222;letter-spacing:0.000px;">Tổng số: <b>424</b> bản ghi</div>
<div class="b" style="left:826px;top:448px;width:220px;height:26px;border:1px solid #9a9ca3;border-radius:2px;box-sizing:border-box;background:#fff"></div>
<div class="b" style="left:1021px;top:449px;width:1px;height:24px;background:#c9cbd0"></div>
<svg class="b" style="left:1028px;top:459px;" width="10" height="6" viewBox="0 0 10 6"><path d="M0 0H10L5 6Z" fill="#666"/></svg>
<div class="t" style="left:835.00px;top:454.15px;font-size:14px;line-height:14px;color:#222;letter-spacing:0.042px;">20 bản ghi trên 1 trang</div>
<div class="t" style="left:1064.50px;top:454.65px;font-size:14px;line-height:14px;color:#b9bbc0;letter-spacing:-0.862px;">Trước</div>
<div class="b" style="left:1117px;top:451px;width:22px;height:21px;border:1px solid #a7a9ae;box-sizing:border-box"></div>
<div class="t" style="left:1124.11px;top:454.65px;font-size:14px;line-height:14px;color:#111;font-weight:bold;letter-spacing:0.000px;">1</div>
<div class="t" style="left:1164.00px;top:454.65px;font-size:14px;line-height:14px;color:#222;letter-spacing:0.000px;">2</div>
<div class="t" style="left:1203.50px;top:454.65px;font-size:14px;line-height:14px;color:#222;letter-spacing:-0.484px;">...</div>
<div class="t" style="left:1246.50px;top:454.65px;font-size:14px;line-height:14px;color:#222;letter-spacing:0.328px;">22</div>
<div class="t" style="left:1288.00px;top:454.65px;font-size:14px;line-height:14px;color:#222;letter-spacing:-0.955px;">Sau</div>
<div class="b" style="left:192px;top:483px;width:1134px;height:11px;background:#f0f1f4"></div>
<div class="b" style="left:699px;top:483px;width:62px;height:11px;background:#6264e8;border-radius:5px"></div>
<svg class="b" style="left:723px;top:484px;" width="14" height="9" viewBox="0 0 14 9"><path d="M2.5 2.5L7 6.5L11.5 2.5" fill="none" stroke="#fff" stroke-width="1.8" stroke-linecap="round" stroke-linejoin="round"/></svg>
<div class="b" style="left:210px;top:501px;width:1101px;height:27px;background:#f1f2f6"></div>
<div class="b" style="left:210px;top:528px;width:1101px;height:1px;background:#babdc3"></div>
<div class="b" style="left:210px;top:556px;width:1101px;height:1px;background:#babdc3"></div>
<div class="b" style="left:210px;top:557px;width:1101px;height:8px;background:#f1f2f6"></div>
<div class="b" style="left:233px;top:564px;width:3px;height:2px;background:#555"></div>
<div class="b" style="left:359px;top:501px;width:1px;height:27px;background:#babdc3"></div>
<div class="b" style="left:359px;top:529px;width:0;height:27px;border-left:1px dotted #a9abb1"></div>
<div class="b" style="left:744px;top:501px;width:1px;height:27px;background:#babdc3"></div>
<div class="b" style="left:744px;top:529px;width:0;height:27px;border-left:1px dotted #a9abb1"></div>
<div class="b" style="left:854px;top:501px;width:1px;height:27px;background:#babdc3"></div>
<div class="b" style="left:854px;top:529px;width:0;height:27px;border-left:1px dotted #a9abb1"></div>
<div class="b" style="left:1003px;top:501px;width:1px;height:27px;background:#babdc3"></div>
<div class="b" style="left:1003px;top:529px;width:0;height:27px;border-left:1px dotted #a9abb1"></div>
<div class="b" style="left:1168px;top:501px;width:1px;height:27px;background:#babdc3"></div>
<div class="b" style="left:1168px;top:529px;width:0;height:27px;border-left:1px dotted #a9abb1"></div>
<svg class="b" style="left:218px;top:509px;" width="10" height="14" viewBox="0 0 10 14"><path d="M2.5 1H7.5M3.3 1V6.5L1.5 8.5H8.5L6.7 6.5V1M5 8.5V12.5" fill="none" stroke="#b5b7bd" stroke-width="1.2" stroke-linejoin="round"/></svg>
<div class="t" style="left:236.60px;top:507.50px;font-size:13px;line-height:13px;color:#1e1e1e;font-weight:bold;letter-spacing:0.379px;">Mã hàng</div>
<svg class="b" style="left:340px;top:509px;" width="11" height="13" viewBox="0 0 11 13"><path d="M3 11V1.5M0.8 3.8L3 1.5L5.2 3.8M8 1.5V11M5.8 8.7L8 11L10.2 8.7" fill="none" stroke="#c6c8cd" stroke-width="1.2" stroke-linecap="round" stroke-linejoin="round"/></svg>
<svg class="b" style="left:367px;top:509px;" width="10" height="14" viewBox="0 0 10 14"><path d="M2.5 1H7.5M3.3 1V6.5L1.5 8.5H8.5L6.7 6.5V1M5 8.5V12.5" fill="none" stroke="#b5b7bd" stroke-width="1.2" stroke-linejoin="round"/></svg>
<div class="t" style="left:386.10px;top:507.50px;font-size:13px;line-height:13px;color:#1e1e1e;font-weight:bold;letter-spacing:0.278px;">Diễn giải</div>
<svg class="b" style="left:725px;top:509px;" width="11" height="13" viewBox="0 0 11 13"><path d="M3 11V1.5M0.8 3.8L3 1.5L5.2 3.8M8 1.5V11M5.8 8.7L8 11L10.2 8.7" fill="none" stroke="#c6c8cd" stroke-width="1.2" stroke-linecap="round" stroke-linejoin="round"/></svg>
<svg class="b" style="left:752px;top:509px;" width="10" height="14" viewBox="0 0 10 14"><path d="M2.5 1H7.5M3.3 1V6.5L1.5 8.5H8.5L6.7 6.5V1M5 8.5V12.5" fill="none" stroke="#b5b7bd" stroke-width="1.2" stroke-linejoin="round"/></svg>
<div class="t" style="left:771.30px;top:507.50px;font-size:13px;line-height:13px;color:#1e1e1e;font-weight:bold;letter-spacing:0.651px;">ĐVT</div>
<svg class="b" style="left:835px;top:509px;" width="11" height="13" viewBox="0 0 11 13"><path d="M3 11V1.5M0.8 3.8L3 1.5L5.2 3.8M8 1.5V11M5.8 8.7L8 11L10.2 8.7" fill="none" stroke="#c6c8cd" stroke-width="1.2" stroke-linecap="round" stroke-linejoin="round"/></svg>
<svg class="b" style="left:862px;top:509px;" width="10" height="14" viewBox="0 0 10 14"><path d="M2.5 1H7.5M3.3 1V6.5L1.5 8.5H8.5L6.7 6.5V1M5 8.5V12.5" fill="none" stroke="#b5b7bd" stroke-width="1.2" stroke-linejoin="round"/></svg>
<div class="t" style="left:914.70px;top:507.50px;font-size:13px;line-height:13px;color:#1e1e1e;font-weight:bold;letter-spacing:-0.325px;">Số lượng</div>
<svg class="b" style="left:984px;top:509px;" width="11" height="13" viewBox="0 0 11 13"><path d="M3 11V1.5M0.8 3.8L3 1.5L5.2 3.8M8 1.5V11M5.8 8.7L8 11L10.2 8.7" fill="none" stroke="#c6c8cd" stroke-width="1.2" stroke-linecap="round" stroke-linejoin="round"/></svg>
<svg class="b" style="left:1011px;top:509px;" width="10" height="14" viewBox="0 0 10 14"><path d="M2.5 1H7.5M3.3 1V6.5L1.5 8.5H8.5L6.7 6.5V1M5 8.5V12.5" fill="none" stroke="#b5b7bd" stroke-width="1.2" stroke-linejoin="round"/></svg>
<div class="t" style="left:1087.00px;top:507.50px;font-size:13px;line-height:13px;color:#1e1e1e;font-weight:bold;letter-spacing:0.006px;">Đơn giá</div>
<svg class="b" style="left:1149px;top:509px;" width="11" height="13" viewBox="0 0 11 13"><path d="M3 11V1.5M0.8 3.8L3 1.5L5.2 3.8M8 1.5V11M5.8 8.7L8 11L10.2 8.7" fill="none" stroke="#c6c8cd" stroke-width="1.2" stroke-linecap="round" stroke-linejoin="round"/></svg>
<svg class="b" style="left:1176px;top:509px;" width="10" height="14" viewBox="0 0 10 14"><path d="M2.5 1H7.5M3.3 1V6.5L1.5 8.5H8.5L6.7 6.5V1M5 8.5V12.5" fill="none" stroke="#b5b7bd" stroke-width="1.2" stroke-linejoin="round"/></svg>
<div class="t" style="left:1233.80px;top:507.50px;font-size:13px;line-height:13px;color:#1e1e1e;font-weight:bold;letter-spacing:0.143px;">Thành tiền</div>
<div class="t" style="left:370.00px;top:535.57px;font-size:13.5px;line-height:13.5px;color:#222;letter-spacing:0.205px;">Dịch vụ lưu trú phòng A.03</div>
<div class="t" style="left:756.00px;top:535.57px;font-size:13.5px;line-height:13.5px;color:#222;letter-spacing:0.000px;">Giờ</div>
<div class="t" style="left:983.41px;top:535.15px;font-size:14px;line-height:14px;color:#222;letter-spacing:0.000px;">1</div>
<div class="t" style="left:1103.00px;top:535.15px;font-size:14px;line-height:14px;color:#222;letter-spacing:0.449px;">220.000</div>
<div class="b" style="left:1169px;top:529px;width:142px;height:27px;overflow:hidden"><div class="t" style="left:99px;top:6.2px;font-size:14px;line-height:14px;color:#222;letter-spacing:0.45px">220.000</div></div>
<div class="b" style="left:1314px;top:317px;width:18px;height:46px;background:#2f7de1;box-shadow:-2px 2px 4px rgba(0,0,0,0.15)"></div>
<svg class="b" style="left:1322px;top:336px;" width="6" height="9" viewBox="0 0 6 9"><path d="M5.5 0.5V8.5L0.5 4.5Z" fill="#fff"/></svg>
<div class="b" style="left:1212px;top:444px;width:100px;height:100px;z-index:1;opacity:0.62"><svg width="100" height="100" viewBox="0 0 100 100"><circle cx="49.3" cy="50" r="32.3" fill="none" stroke="#aeaeae" stroke-width="2.8"/><circle cx="49.3" cy="50" r="19.5" fill="none" stroke="#aeaeae" stroke-width="4.5"/><g transform="rotate(-16.5 49.2 51.5)"><rect x="8.2" y="42.5" width="82" height="18" rx="2.5" fill="#a2a2a2"/><text x="49.2" y="56" font-size="12" font-weight="bold" fill="#f6f6f6" text-anchor="middle" font-family="Liberation Sans" textLength="72" lengthAdjust="spacingAndGlyphs">DỮ LIỆU MẪU</text></g></svg></div>
<div class="b" style="left:0px;top:0px;width:188px;height:1px;background:#606169;z-index:5"></div>
<div class="b" style="left:188px;top:0px;width:1145px;height:1px;background:#414143;z-index:5"></div>
<div class="b" style="left:0px;top:566px;width:188px;height:1px;background:#6a6b70;z-index:5"></div>
<div class="b" style="left:188px;top:566px;width:1145px;height:1px;background:#555557;z-index:5"></div>
<div class="b" style="left:0px;top:0px;width:1px;height:567px;background:#5c5e66;z-index:5"></div>
<div class="b" style="left:1332px;top:0px;width:1px;height:567px;background:#4a4a4c;z-index:5"></div>
</body></html>
